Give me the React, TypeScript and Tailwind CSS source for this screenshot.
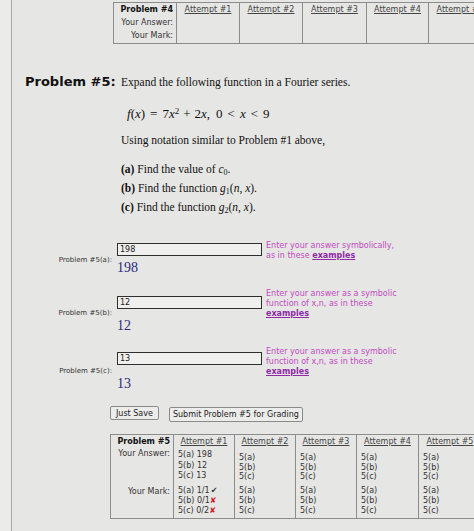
const cols = [
  { name: 'Attempt #1', top: 'w-[63px]', bot: 'w-[61px]' },
  { name: 'Attempt #2', top: 'w-[63px]', bot: 'w-[61px]' },
  { name: 'Attempt #3', top: 'w-[64px]', bot: 'w-[61px]' },
  { name: 'Attempt #4', top: 'w-[62px]', bot: 'w-[62px]' },
  { name: 'Attempt #5', top: 'w-[63px]', bot: 'w-[63px]' },
];

function TopTable() {
  return (
    <div className="ml-[101px] mt-[2px] flex w-max border border-[#8c8c8c] text-[8px] leading-[13px] text-[#333]">
      <div className="w-[62px] shrink-0 pr-[3px] text-right">
        <div className="h-[13px] font-bold text-[#111]">Problem #4</div>
        <div className="h-[13px]">Your Answer:</div>
        <div className="h-[14px]">Your Mark:</div>
      </div>
      {cols.map((c) => (
        <div key={c.name} className={`${c.top} shrink-0 border-l border-[#8c8c8c] text-center`}>
          <div className="h-[13px] whitespace-nowrap text-[#444] underline">{c.name}</div>
        </div>
      ))}
    </div>
  );
}

function AnswerRow({
  label,
  value,
  lines,
  inputShift,
}: {
  label: string;
  value: string;
  lines: string[];
  inputShift: string;
}) {
  return (
    <div className="flex">
      <div className="w-[100px] flex items-center justify-end pt-[4px] text-[7px] text-[#333]">{label}</div>
      <div className="ml-[5px] flex flex-col">
        <div className="flex items-center">
          <div className={`w-[145px] h-[13px] border border-[#2e2e2e] bg-[#efefed] pl-[2px] text-[8px] leading-[11px] text-[#222] ${inputShift}`}>
            {value}
          </div>
          <div className="ml-[4px] text-[8px] leading-[10px] text-[#c24ac2]">
            {lines.map((l) => (
              <div key={l}>{l}</div>
            ))}
            <div>
              {lines.length === 1 ? 'as in these ' : ''}
              <span className="font-bold text-[#8e2aa8] underline">examples</span>
            </div>
          </div>
        </div>
        <div className="font-['Liberation_Serif',serif] text-[14px] leading-[14px] text-[#2a2a80]">{value}</div>
      </div>
    </div>
  );
}

function Mark({ t, ok }: { t: string; ok: boolean }) {
  return (
    <div>
      {t}
      {ok ? <span className="ml-[1px] text-[#333]">✔</span> : <span className="text-[#d0141c]">✘</span>}
    </div>
  );
}

function BottomTable() {
  return (
    <div className="ml-[98px] mt-[12px] flex w-max border border-[#8c8c8c] text-[8px] text-[#333]">
      <div className="w-[62px] shrink-0 pr-[3px] text-right">
        <div className="h-[14px] leading-[14px] font-bold text-[#111]">Problem #5</div>
        <div className="h-[36px] leading-[10px]">Your Answer:</div>
        <div className="h-[33px] pt-[2px] leading-[10px]">Your Mark:</div>
      </div>
      {cols.map((c, i) => (
        <div key={c.name} className={`${c.bot} shrink-0 border-l border-[#8c8c8c]`}>
          <div className="h-[14px] leading-[14px] text-center text-[#444] underline">{c.name}</div>
          {i === 0 ? (
            <>
              <div className="h-[36px] pl-[4px] pt-[1px] leading-[10.5px]">
                <div>5(a) 198</div>
                <div>5(b) 12</div>
                <div>5(c) 13</div>
              </div>
              <div className="h-[33px] pl-[4px] pt-[1px] leading-[9.75px]">
                <Mark t="5(a) 1/1" ok />
                <Mark t="5(b) 0/1" ok={false} />
                <Mark t="5(c) 0/2" ok={false} />
              </div>
            </>
          ) : (
            <>
              <div className="h-[36px] pl-[4px] pt-[4px] leading-[9.5px]">
                <div>5(a)</div>
                <div>5(b)</div>
                <div>5(c)</div>
              </div>
              <div className="h-[33px] pl-[4px] pt-[1px] leading-[9.75px]">
                <div>5(a)</div>
                <div>5(b)</div>
                <div>5(c)</div>
              </div>
            </>
          )}
        </div>
      ))}
    </div>
  );
}

export default function App() {
  return (
    <div className="flex h-[531px] w-[474px] overflow-hidden bg-[#e6e6e4] font-['DejaVu_Sans',Verdana,sans-serif]">
      <div className="w-[12px] shrink-0 border-r border-[#a9a9a9] bg-[#ebebe9]" />
      <div className="min-w-0 flex-1">
        <TopTable />

        <div className="mt-[30px] flex">
          <div className="w-[109px] shrink-0 pl-[13px] text-[13px] font-bold leading-[16px] text-[#111]">Problem #5:</div>
          <div className="font-['Liberation_Serif',serif] text-[11.5px] leading-[16px] text-[#111]">
            <div>Expand the following function in a Fourier series.</div>
            <div className="mt-[16px] ml-[6px] text-[13px]">
              <i>f</i>(<i>x</i>)<span className="mx-[5px]">=</span>7<i>x</i>
              <sup className="text-[9px]">2</sup>
              <span className="mx-[4px]">+</span>2<i>x</i>,<span className="ml-[6px]">0</span>
              <span className="mx-[5px]">&lt;</span>
              <i>x</i>
              <span className="mx-[5px]">&lt;</span>9
            </div>
            <div className="mt-[10px]">Using notation similar to Problem #1 above,</div>
            <div className="mt-[12px] leading-[19px]">
              <div>
                <b>(a)</b> Find the value of <i>c</i>
                <sub className="text-[8px]">0</sub>.
              </div>
              <div>
                <b>(b)</b> Find the function <i>g</i>
                <sub className="text-[8px]">1</sub>(<i>n</i>, <i>x</i>).
              </div>
              <div>
                <b>(c)</b> Find the function <i>g</i>
                <sub className="text-[8px]">2</sub>(<i>n</i>, <i>x</i>).
              </div>
            </div>
          </div>
        </div>

        <div className="mt-[24px]">
          <AnswerRow
            label="Problem #5(a):"
            value="198"
            lines={['Enter your answer symbolically,']}
            inputShift="mb-[4px]"
          />
        </div>
        <div className="mt-[14px]">
          <AnswerRow
            label="Problem #5(b):"
            value="12"
            lines={['Enter your answer as a symbolic', 'function of x,n, as in these']}
            inputShift="mb-[4px]"
          />
        </div>
        <div className="mt-[14px]">
          <AnswerRow
            label="Problem #5(c):"
            value="13"
            lines={['Enter your answer as a symbolic', 'function of x,n, as in these']}
            inputShift="mb-[7px]"
          />
        </div>

        <div className="ml-[98px] mt-[15px] flex items-start gap-[10px] text-[8px] leading-[11px] text-[#222]">
          <button className="rounded-[2px] border border-[#8a8a8a] bg-[#ececea] px-[5px] py-[0.5px]">Just Save</button>
          <button className="mt-[1px] rounded-[2px] border border-[#8a8a8a] bg-[#ececea] px-[3px] py-[1px]">
            Submit Problem #5 for Grading
          </button>
        </div>

        <BottomTable />
      </div>
    </div>
  );
}
